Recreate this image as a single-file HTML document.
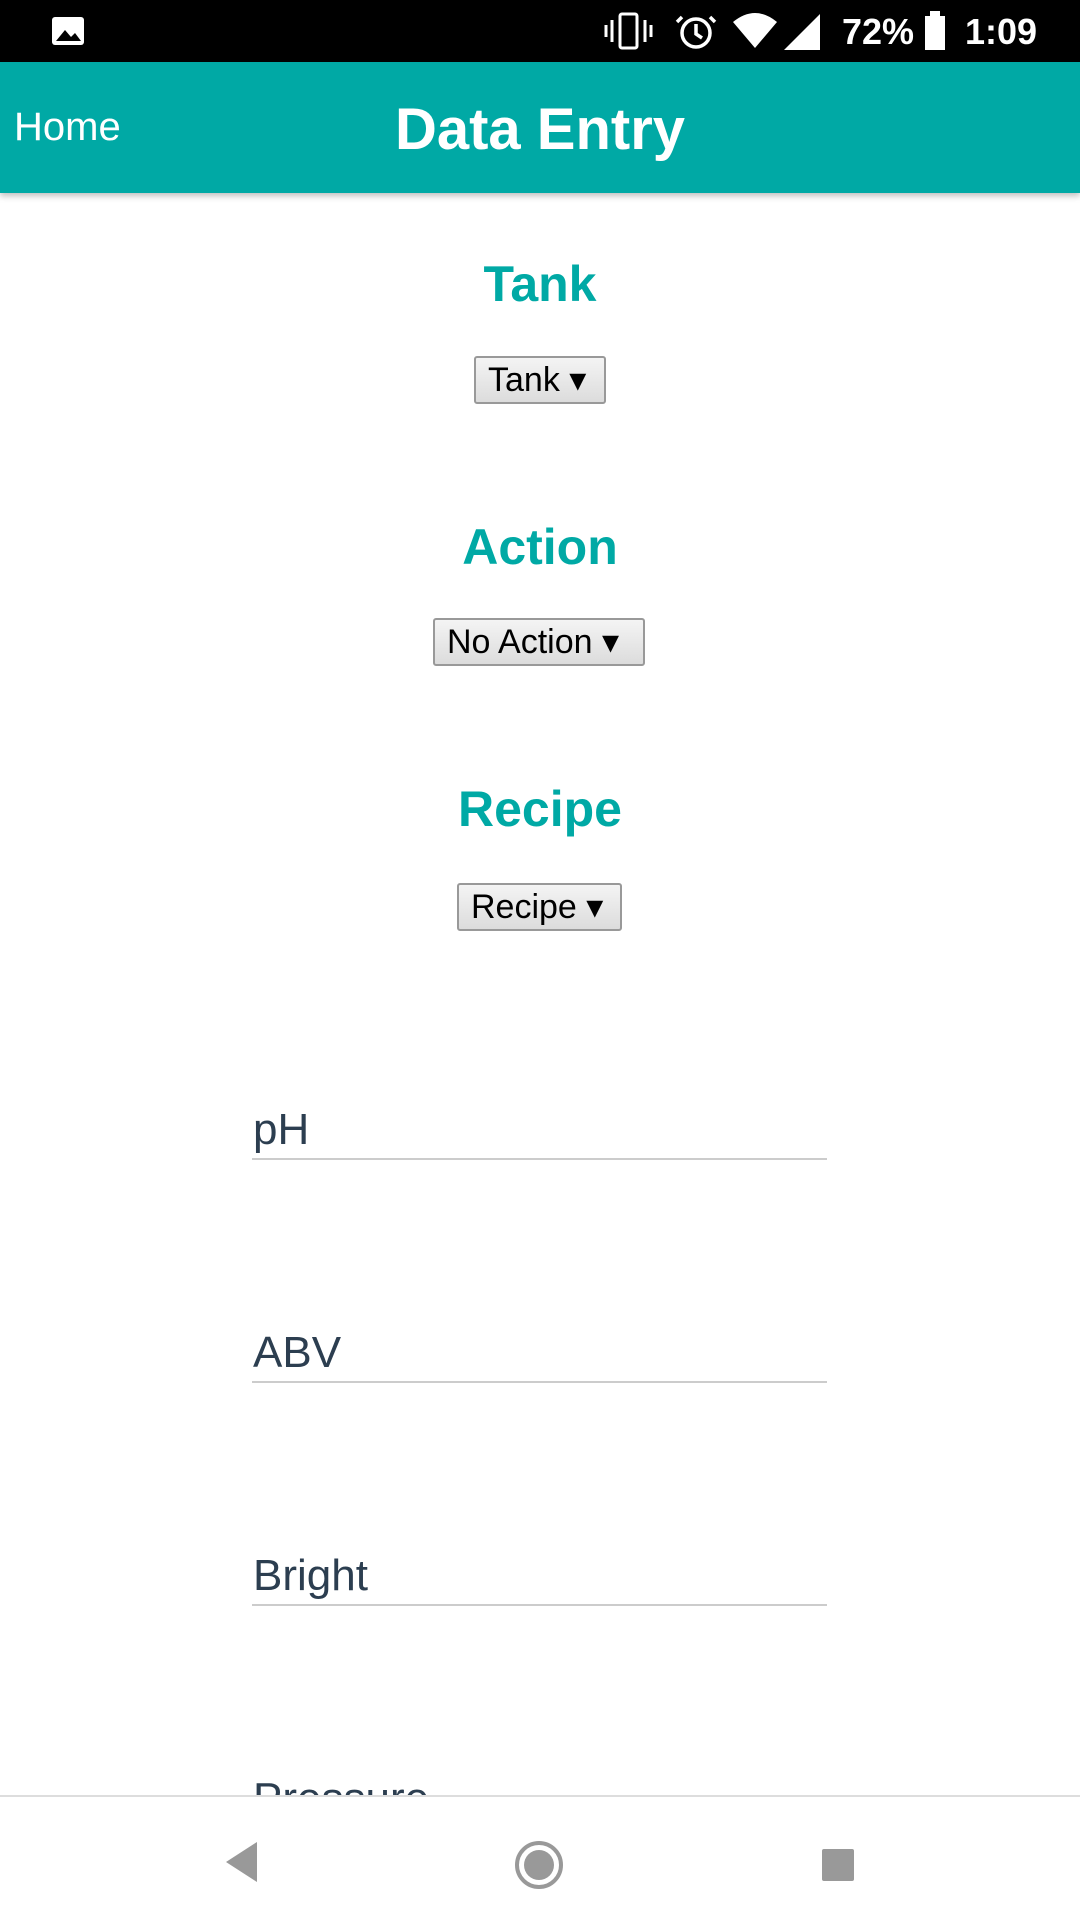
<!DOCTYPE html>
<html><head><meta charset="utf-8"><style>
*{margin:0;padding:0;box-sizing:border-box}
body{width:1080px;height:1920px;position:relative;background:#fff;font-family:"Liberation Sans",Roboto,sans-serif;overflow:hidden}
.sb{position:absolute;top:0;left:0;width:1080px;height:62px;background:#000;color:#fff}
.hd{position:absolute;top:62px;left:0;width:1080px;height:131px;background:#00a9a5;box-shadow:0 3px 6px rgba(0,0,0,.25);color:#fff}
.h2{position:absolute;left:0;width:1080px;text-align:center;color:#00a9a5;font-weight:bold;font-size:50px}
.sel{position:absolute;height:48px;border:2px solid #999;border-radius:3px;background:linear-gradient(#f4f4f4,#dcdcdc);font-size:34px;color:#000;line-height:44px;padding-left:12px}
.lbl{position:absolute;left:252px;width:575px;border-bottom:2px solid #ccc;font-size:44px;color:#2c3e50;height:60px;line-height:60px;padding-left:1px}
.nav{position:absolute;top:1795px;left:0;width:1080px;height:125px;background:#fff;border-top:2px solid #ddd}
</style></head><body>
<div class="sb">
<svg width="1080" height="62" style="position:absolute;left:0;top:0">
<rect x="52" y="17" width="32" height="28" rx="3" fill="#fff"/><path d="M56 41 L65 30 L71 37 L75 33 L81 41Z" fill="#000"/>
<rect x="620" y="14" width="17" height="34" rx="2" fill="none" stroke="#fff" stroke-width="3"/><path d="M612 20v22M645 20v22M606 25v12M651 25v12" stroke="#fff" stroke-width="3"/>
<circle cx="696" cy="33" r="14" fill="none" stroke="#fff" stroke-width="3.5"/><path d="M696 24v10l6 4M682 17l-5 5M710 17l5 5" stroke="#fff" stroke-width="3.5" fill="none"/>
<path d="M733 22 Q755 4 777 22 L755 48Z" fill="#fff"/>
<path d="M820 14 L820 50 L784 50Z" fill="#fff"/>
<text x="842" y="44" fill="#fff" font-size="36" font-family="Liberation Sans" font-weight="bold">72%</text>
<rect x="925" y="16" width="20" height="34" fill="#fff"/><rect x="930" y="11" width="10" height="6" fill="#fff"/>
<text x="965" y="44" fill="#fff" font-size="36" font-family="Liberation Sans" font-weight="bold">1:09</text>
</svg></div>
<div class="hd">
<div style="position:absolute;left:14px;top:43px;font-size:40px">Home</div>
<div style="position:absolute;left:0;width:1080px;text-align:center;top:34px;font-size:58px;font-weight:bold">Data Entry</div>
</div>
<div class="h2" style="top:255px">Tank</div>
<div class="sel" style="left:474px;top:356px;width:132px">Tank ▾</div>
<div class="h2" style="top:518px">Action</div>
<div class="sel" style="left:433px;top:618px;width:212px">No Action ▾</div>
<div class="h2" style="top:780px">Recipe</div>
<div class="sel" style="left:457px;top:883px;width:165px">Recipe ▾</div>
<div class="lbl" style="top:1100px">pH</div>
<div class="lbl" style="top:1323px">ABV</div>
<div class="lbl" style="top:1546px">Bright</div>
<div class="lbl" style="top:1769px;border:none">Pressure</div>
<div class="nav"><svg width="1080" height="125">
<path d="M257 45 L257 85 L226 65Z" fill="#999"/>
<circle cx="539" cy="68" r="22" fill="none" stroke="#999" stroke-width="4"/><circle cx="539" cy="68" r="15" fill="#999"/>
<rect x="822" y="52" width="32" height="32" rx="2" fill="#999"/>
</svg></div>
</body></html>
